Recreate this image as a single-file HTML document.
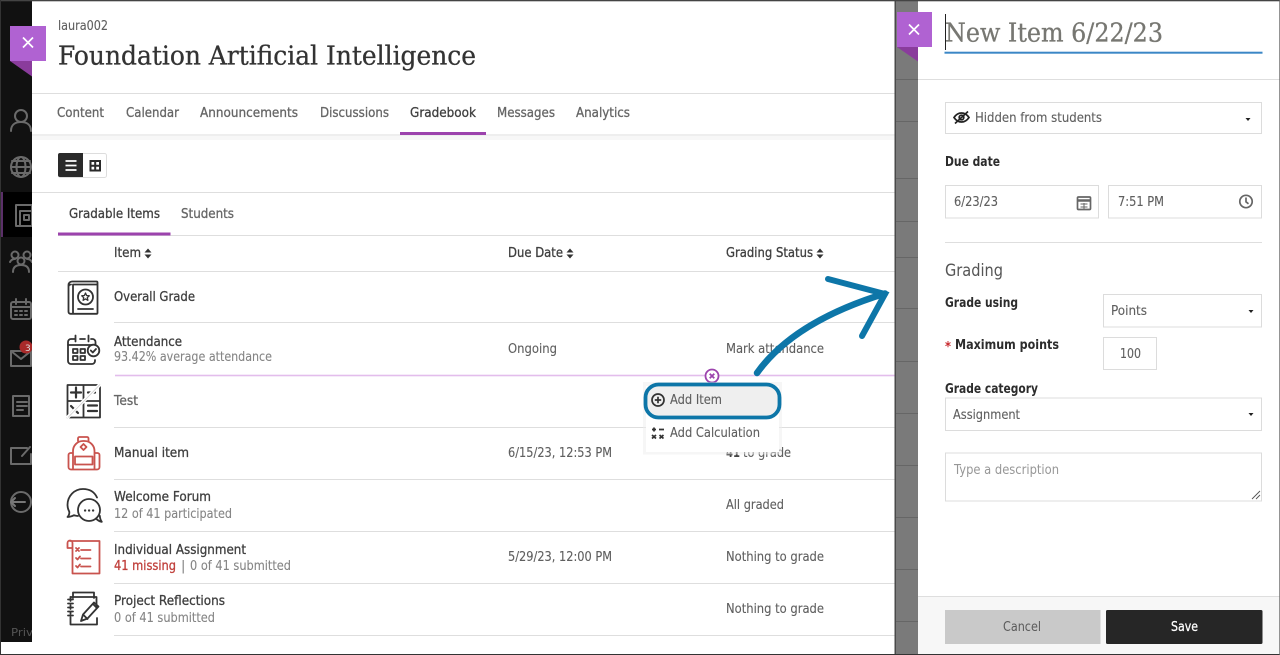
<!DOCTYPE html>
<html><head><meta charset="utf-8"><title>Gradebook</title>
<style>
html,body{margin:0;padding:0;width:1280px;height:655px;overflow:hidden;background:#fff}
svg{display:block;position:absolute;left:0;top:0;filter:blur(.3px)}
text{font-family:"DejaVu Sans","Liberation Sans",sans-serif;font-size:13px;fill:#666;white-space:pre}
.m{fill:#3f3f3f;stroke:#3f3f3f;stroke-width:.3}
.n{fill:#666;stroke:#666;stroke-width:.3}
.s{fill:#858585;stroke:#858585;stroke-width:.1}
.d{fill:#5f5f5f;stroke:#5f5f5f;stroke-width:.12}
.b{fill:#2c2c2c;font-weight:bold;font-size:13px}
.se{font-family:"DejaVu Serif","Liberation Serif",serif}
.ic{fill:none;stroke:#333;stroke-width:1.8;stroke-linejoin:round;stroke-linecap:round}
.r{stroke:#c9534e}
.sb{fill:none;stroke:#6a6a6a;stroke-width:2;stroke-linecap:round;stroke-linejoin:round}
.box{fill:#fff;stroke:#dcdcdc;stroke-width:1}
.l{stroke:#dedede;stroke-width:1}
</style></head><body>
<svg width="1280" height="655" viewBox="0 0 1280 655" xmlns="http://www.w3.org/2000/svg">
<rect width="1280" height="655" fill="#fff"/>
<!-- sidebar -->
<rect x="0" y="0" width="32" height="642" fill="#111"/>
<rect x="0" y="192" width="32" height="45" fill="#000"/>
<rect x="1" y="192" width="2" height="45" fill="#5a2f68"/>
<g class="sb">
<circle cx="21" cy="116" r="6"/><path d="M11 131c0-6 4-9 10-9s10 3 10 9"/>
<circle cx="21" cy="167" r="10"/><ellipse cx="21" cy="167" rx="4.500" ry="10"/><path d="M11 167h20M12 161h18M12 173h18"/>
<rect x="16" y="205" width="16" height="21"/><path d="M20 211h12M20 211v15"/><rect x="24" y="215" width="5" height="5"/>
<circle cx="21" cy="261" r="3.500"/><circle cx="15" cy="255" r="3.500"/><circle cx="27" cy="255" r="3.500"/><path d="M13 272c0-5 3-7 8-7s8 2 8 7M10 262c1-2 3-3 5-3M32 262c-1-2-3-3-5-3"/>
<rect x="11" y="302" width="20" height="17" rx="2"/><path d="M11 307h20M16 299v5M26 299v5M15 311h2M20 311h2M25 311h2M15 315h2M20 315h2M25 315h2"/>
<rect x="11" y="351" width="20" height="15"/><path d="M11 351l10 8 10-8"/>
<path d="M13 396h16v20h-16zM17 402h10M17 406h10M17 410h6"/>
<path d="M27 448H11v16h20v-10M22 456l8-9"/>
<circle cx="21" cy="502" r="10"/><path d="M11 502h14M11 502l4-4M11 502l4 4" stroke="#777"/>
</g>
<circle cx="26" cy="347" r="6.500" fill="#a82a2a"/>
<text x="25" y="351" style="font-size:9px;fill:#ddd">3</text>
<text x="11" y="636" style="font-size:11px;fill:#555" textLength="22" lengthAdjust="spacingAndGlyphs">Priv</text>
<!-- main -->
<rect x="32" y="0" width="863" height="655" fill="#fff"/>
<rect x="0" y="642" width="32" height="13" fill="#fff"/>
<rect x="32" y="136" width="863" height="4" fill="#f7f7f7"/>
<path class="l" d="M32 93.500H895M32 135H895"/>
<path class="l" d="M32 192.500H895M58 235.500H895M58 271.500H895M114 322.500H895M114 427.500H895M114 479.500H895M114 531.500H895M114 583.500H895M114 635.500H895"/>
<text x="58" y="30" class="d" textLength="50" lengthAdjust="spacingAndGlyphs">laura002</text>
<text x="58" y="64.500" class="se" style="font-size:26.500px;fill:#333;stroke:#333;stroke-width:.3" textLength="418" lengthAdjust="spacingAndGlyphs">Foundation Artificial Intelligence</text>
<!-- nav -->
<text class="n" x="57" y="117" textLength="47" lengthAdjust="spacingAndGlyphs">Content</text>
<text class="n" x="126" y="117" textLength="53" lengthAdjust="spacingAndGlyphs">Calendar</text>
<text class="n" x="200" y="117" textLength="98" lengthAdjust="spacingAndGlyphs">Announcements</text>
<text class="n" x="320" y="117" textLength="69" lengthAdjust="spacingAndGlyphs">Discussions</text>
<text class="m" x="410" y="117" textLength="66" lengthAdjust="spacingAndGlyphs">Gradebook</text>
<text class="n" x="497" y="117" textLength="58" lengthAdjust="spacingAndGlyphs">Messages</text>
<text class="n" x="576" y="117" textLength="54" lengthAdjust="spacingAndGlyphs">Analytics</text>
<rect x="400" y="132" width="86" height="3" fill="#9c43ad"/>
<!-- toggle -->
<rect x="58.500" y="153.500" width="48" height="24" rx="2" fill="#fff" stroke="#ddd"/>
<path d="M60 153h23v24H60a2 2 0 0 1-2-2V155a2 2 0 0 1 2-2z" fill="#2a2a2a"/>
<path d="M65.500 161h11M65.500 165.500h11M65.500 170h11" stroke="#fff" stroke-width="1.800"/>
<path d="M90.500 161h9.500v9.500h-9.500zM95.200 161v9.500M90.500 165.700h9.500" stroke="#2a2a2a" stroke-width="2" fill="none"/>
<!-- tabs -->
<text class="m" x="69" y="218" textLength="91" lengthAdjust="spacingAndGlyphs">Gradable Items</text>
<text class="n" x="181" y="218" textLength="53" lengthAdjust="spacingAndGlyphs">Students</text>
<rect x="58" y="232.500" width="112.500" height="3" fill="#9c43ad"/>
<!-- header -->
<g fill="#333">
<text class="m" x="114" y="257" textLength="27" lengthAdjust="spacingAndGlyphs">Item</text>
<path d="M144.500 252.500l3.500-4 3.500 4zM144.500 254.500l3.500 4 3.500-4z"/>
<text class="m" x="508" y="257" textLength="55" lengthAdjust="spacingAndGlyphs">Due Date</text>
<path d="M566.500 252.500l3.500-4 3.500 4zM566.500 254.500l3.500 4 3.500-4z"/>
<text class="m" x="726" y="257" textLength="87" lengthAdjust="spacingAndGlyphs">Grading Status</text>
<path d="M816.500 252.500l3.500-4 3.500 4zM816.500 254.500l3.500 4 3.500-4z"/>
</g>
<!-- rows -->
<text class="m" x="114" y="301" textLength="81" lengthAdjust="spacingAndGlyphs">Overall Grade</text>
<text class="m" x="114" y="346" textLength="68" lengthAdjust="spacingAndGlyphs">Attendance</text>
<text class="s" x="114" y="361" textLength="158" lengthAdjust="spacingAndGlyphs">93.42% average attendance</text>
<text class="d" x="508" y="353" textLength="49" lengthAdjust="spacingAndGlyphs">Ongoing</text>
<text class="d" x="726" y="353" textLength="98" lengthAdjust="spacingAndGlyphs">Mark attendance</text>
<text class="n" x="114" y="405" textLength="24" lengthAdjust="spacingAndGlyphs">Test</text>
<text class="m" x="114" y="457" textLength="75" lengthAdjust="spacingAndGlyphs">Manual item</text>
<text class="d" x="508" y="457" textLength="104" lengthAdjust="spacingAndGlyphs">6/15/23, 12:53 PM</text>
<text x="726" y="457" style="font-weight:bold;fill:#444" textLength="14" lengthAdjust="spacingAndGlyphs">41</text>
<text class="d" x="743" y="457" textLength="48" lengthAdjust="spacingAndGlyphs">to grade</text>
<text class="m" x="114" y="501" textLength="97" lengthAdjust="spacingAndGlyphs">Welcome Forum</text>
<text class="s" x="114" y="518" textLength="118" lengthAdjust="spacingAndGlyphs">12 of 41 participated</text>
<text class="d" x="726" y="509" textLength="58" lengthAdjust="spacingAndGlyphs">All graded</text>
<text class="m" x="114" y="554" textLength="132" lengthAdjust="spacingAndGlyphs">Individual Assignment</text>
<text x="114" y="570" style="fill:#c0403c;stroke:#c0403c;stroke-width:.3" textLength="62" lengthAdjust="spacingAndGlyphs">41 missing</text>
<text class="s" x="181" y="570">|</text>
<text class="s" x="190" y="570" textLength="101" lengthAdjust="spacingAndGlyphs">0 of 41 submitted</text>
<text class="d" x="508" y="561" textLength="104" lengthAdjust="spacingAndGlyphs">5/29/23, 12:00 PM</text>
<text class="d" x="726" y="561" textLength="98" lengthAdjust="spacingAndGlyphs">Nothing to grade</text>
<text class="m" x="114" y="605" textLength="111" lengthAdjust="spacingAndGlyphs">Project Reflections</text>
<text class="s" x="114" y="622" textLength="101" lengthAdjust="spacingAndGlyphs">0 of 41 submitted</text>
<text class="d" x="726" y="613" textLength="98" lengthAdjust="spacingAndGlyphs">Nothing to grade</text>
<!-- row icons -->
<g class="ic">
<!-- book -->
<path d="M73 281.500h23.500a1 1 0 0 1 1 1v30.500a.8.8 0 0 1-.8.8H70.500a2 2 0 0 1-2-2V285a3.500 3.500 0 0 1 3.500-3.500zM73 284.500h24.500M73 284.500v29.300M68.500 287a2.500 2.500 0 0 1 2.500-2.500"/>
<circle cx="85.500" cy="297" r="7.500"/><path d="M85.500 293l1.100 2.500 2.700.3-2 1.800.6 2.700-2.400-1.400-2.400 1.400.6-2.700-2-1.800 2.700-.3z" stroke-width="1.300"/><path d="M78 309h15"/>
<!-- attendance -->
<path d="M74.500 339h-3.500a3 3 0 0 0-3 3v19a3 3 0 0 0 3 3h21a3 3 0 0 0 3-3v-1M80 339h5M91 339h1.500a3 3 0 0 1 3 3v2M75.500 335.500v6M88.500 335.500v6"/>
<path d="M68 345h27"/>
<rect x="73" y="349" width="4.500" height="4"/><rect x="80.500" y="349" width="4.500" height="4"/><rect x="73" y="356" width="4.500" height="4"/><rect x="80.500" y="356" width="4.500" height="4"/>
<circle cx="93.500" cy="350.500" r="5.800" fill="#fff"/><path d="M90.800 350.500l2 2 3.200-3.500"/>
<!-- calc -->
<path d="M67.500 385h32.500v32.500H67.500zM83.500 385v32.500M67.500 401h32.500"/>
<path d="M71 392.500h10M76 387.500v10M88 392.500h7M71 406l7 7M78 406l-7 7M88 405.500h9M88 411h9" stroke-width="2.200"/>
</g>
<path d="M100.500 384L67 418" stroke="#fff" stroke-width="3.500"/>
<path d="M100 384.500L68 417.500" stroke="#ccc" stroke-width=".8"/>
<g class="ic r">
<!-- backpack -->
<path d="M78 441v-2.500a1.500 1.500 0 0 1 1.500-1.500h7.500a1.500 1.500 0 0 1 1.500 1.500v2.500M73 469.500V451a10 10 0 0 1 10-10h1.500a10 10 0 0 1 10 10v18.500zM73 453h-2.500a2 2 0 0 0-2 2v12a2.500 2.500 0 0 0 2.500 2.500h2M94.500 453h3a2 2 0 0 1 2 2v12a2.500 2.500 0 0 1-2.500 2.500h-2.500"/>
<path d="M83.500 444l3 3-3 3-3-3z"/>
<rect x="75" y="456.500" width="17.500" height="8"/>
<!-- list -->
<path d="M67.500 543a2.500 2.500 0 0 1 5 0v5h-5zM70 541h29.500v32.500H72.500v-30"/>
<path d="M81 550h9.500M81 558.500h9.500M81 566.500h9.500M76 548l3 3M79 548l-3 3M76 558l1.500 1.500 2.500-3M76 566l1.500 1.500 2.500-3"/>
</g>
<g class="ic">
<!-- forum -->
<path d="M78 516c-1.500 0-3-.4-4-.8-1.800.9-4 1.800-6.500 1.800 1.300-1.300 2-3 1.800-5.200a15 15 0 0 1-1.800-6.800c0-9 6.800-16 15.500-16 6.500 0 11.500 3 14 8.500"/>
<circle cx="89" cy="510" r="11" fill="#fff"/>
<path d="M96 518.500c1.500 1.700 3.500 3 5.800 3.300-1-1.300-1.800-3.500-2-6"/>
<path d="M85 510.500h.2M89 510.500h.2M93 510.500h.2" stroke-width="2.200"/>
<!-- notebook -->
<path d="M73 598v-5.500h21v5.500M70.500 597h26v11M97 618v6.500H70.500V617"/><path d="M70.500 597v4M70.500 605v4M70.500 612v2"/>
<path d="M68 599.500h5M68 603.500h5M68 607.500h5M68 611.500h5M68 615.500h5"/>
<path d="M81 621l2-6.500 11-12 4.500 4-11 12zM83 614.500l4.500 4.500M93 604l4 4M81 621l2.500-1"/>
</g>
<!-- purple add line -->
<rect x="115" y="374.700" width="780" height="1.600" fill="#e3bdec"/>
<circle cx="712" cy="376" r="6.500" fill="#fff" stroke="#9c43ad" stroke-width="1.800"/>
<path d="M709.700 373.700l4.600 4.600M714.300 373.700l-4.600 4.600" stroke="#9c43ad" stroke-width="1.800"/>
<!-- popup -->
<rect x="643" y="382" width="139" height="72.500" fill="#eee" opacity=".5"/>
<rect x="646" y="386" width="133" height="66" fill="#fff"/>
<rect x="645.500" y="384.500" width="134" height="33" rx="13" fill="#efefef" stroke="#0d76a8" stroke-width="3.800"/>
<circle cx="658" cy="400" r="6" fill="none" stroke="#333" stroke-width="1.700"/>
<path d="M654.800 400h6.400M658 396.800v6.400" stroke="#333" stroke-width="1.700"/>
<text class="d" x="670" y="404" textLength="52" lengthAdjust="spacingAndGlyphs">Add Item</text>
<path d="M652 429.500h4M654 427.500v4M659 429.500h5M652 435l4 3.500M656 435l-4 3.500M659.500 435l4 3.500M663.500 435l-4 3.500" stroke="#333" stroke-width="1.800" fill="none"/>
<text class="d" x="670" y="437" textLength="90" lengthAdjust="spacingAndGlyphs">Add Calculation</text>
<!-- gray strip -->
<rect x="895" y="0" width="23" height="655" fill="#7a7a7a"/>
<rect x="894.500" y="0" width="1.500" height="655" fill="#4a4a4a"/>
<path d="M896 79.500h22M896 121.500h22M896 178.500h22M896 221.500h22M896 257.500h22M896 308.500h22M896 361.500h22M896 413.500h22M896 465.500h22M896 517.500h22M896 569.500h22M896 621.500h22" stroke="#666" stroke-width="1"/>
<!-- arrow -->
<path d="M757 373C782 338 825 312 885 293.500" fill="none" stroke="#0d76a8" stroke-width="6.500" stroke-linecap="round"/>
<path d="M828 279L885 294 862 336" fill="none" stroke="#0d76a8" stroke-width="6" stroke-linecap="round" stroke-linejoin="miter"/>
<!-- tags -->
<rect x="10" y="26" width="36" height="35" fill="#b062d2"/>
<path d="M10 61h22v15.500z" fill="#8a3c9c"/>
<path d="M23 37.500l10 10M33 37.500l-10 10" stroke="#fff" stroke-width="1.700"/>
<!-- panel -->
<rect x="918" y="0" width="362" height="655" fill="#fff"/>
<rect x="897" y="12" width="35" height="35" fill="#b062d2"/>
<path d="M897 47h21v14.500z" fill="#8a3c9c"/>
<path d="M909 24.500l10 10M919 24.500l-10 10" stroke="#fff" stroke-width="1.700"/>
<text class="se" x="945" y="41.500" style="font-size:26.500px;fill:#777772;stroke:#777772;stroke-width:.3" textLength="218" lengthAdjust="spacingAndGlyphs">New Item 6/22/23</text>
<rect x="945" y="14" width="1" height="36" fill="#222"/>
<rect x="944.500" y="51.700" width="318" height="2" fill="#3b87c6"/>
<path class="l" d="M918 79.500H1280"/>
<rect class="box" x="945.500" y="102.500" width="316" height="31"/>
<g fill="none" stroke="#222" stroke-width="1.700">
<path d="M954 117.500c2-3 4.500-4.500 7.500-4.500s5.500 1.500 7.500 4.500c-2 3-4.500 4.500-7.500 4.500s-5.500-1.500-7.500-4.500z"/><circle cx="961.500" cy="117.500" r="2.300"/><path d="M955 123.500l13-12"/>
</g>
<text class="d" x="975" y="122" textLength="127" lengthAdjust="spacingAndGlyphs">Hidden from students</text>
<path d="M1245.500 118h5l-2.500 3z" fill="#222"/>
<text class="b" x="945" y="166" textLength="55" lengthAdjust="spacingAndGlyphs">Due date</text>
<rect class="box" x="945.500" y="185.500" width="153" height="32.500"/>
<rect class="box" x="1108.500" y="185.500" width="153" height="32.500"/>
<text class="d" x="954" y="206" textLength="44" lengthAdjust="spacingAndGlyphs">6/23/23</text>
<text class="d" x="1118" y="206" textLength="46" lengthAdjust="spacingAndGlyphs">7:51 PM</text>
<g fill="none" stroke="#666" stroke-width="1.700">
<rect x="1077.500" y="197" width="13" height="12.500" rx="1"/><path d="M1077.500 200.500h13" stroke-width="2.500"/><path d="M1080.500 204h7M1080.500 207h7M1084 203v6" stroke-width="1"/>
<circle cx="1246" cy="201.500" r="6.200"/><path d="M1246 197.500v4.300l2.500 2"/>
</g>
<path class="l" d="M945 242.500H1262" stroke="#d5d5d5"/>
<text x="945" y="276" style="font-size:16.500px;fill:#555" textLength="58" lengthAdjust="spacingAndGlyphs">Grading</text>
<text class="b" x="945" y="307" textLength="73" lengthAdjust="spacingAndGlyphs">Grade using</text>
<rect class="box" x="1103.500" y="294.500" width="158" height="32.500"/>
<text class="d" x="1111" y="315" textLength="36" lengthAdjust="spacingAndGlyphs">Points</text>
<path d="M1248.500 310h5l-2.500 3z" fill="#222"/>
<text x="945" y="351" style="font-weight:bold;fill:#c8282d" textLength="6" lengthAdjust="spacingAndGlyphs">*</text>
<text class="b" x="955" y="349" textLength="104" lengthAdjust="spacingAndGlyphs">Maximum points</text>
<rect class="box" x="1103.500" y="337.500" width="53" height="32"/>
<text class="d" x="1120" y="358" textLength="21" lengthAdjust="spacingAndGlyphs">100</text>
<text class="b" x="945" y="393" textLength="93" lengthAdjust="spacingAndGlyphs">Grade category</text>
<rect class="box" x="945.500" y="398" width="316" height="32.500"/>
<text class="d" x="953" y="419" textLength="67" lengthAdjust="spacingAndGlyphs">Assignment</text>
<path d="M1248.500 413h5l-2.500 3z" fill="#222"/>
<rect class="box" x="945.500" y="453" width="316" height="48"/>
<text x="954" y="474" style="fill:#979797" textLength="105" lengthAdjust="spacingAndGlyphs">Type a description</text>
<path d="M1252 499l8-8M1256 499l4-4" stroke="#555" stroke-width=".9"/>
<!-- footer -->
<rect x="918" y="597" width="362" height="58" fill="#f7f7f7"/>
<path class="l" d="M918 596.500H1280" stroke="#d8d8d8"/>
<rect x="945" y="610" width="155.500" height="34" fill="#c9c9c9"/>
<text x="1003" y="631" style="fill:#5a5a5a" textLength="38" lengthAdjust="spacingAndGlyphs">Cancel</text>
<rect x="1106" y="610" width="156.500" height="34" rx="1.500" fill="#262626"/>
<text x="1171" y="631" style="fill:#fff;stroke:#fff;stroke-width:.25" textLength="27" lengthAdjust="spacingAndGlyphs">Save</text>
<!-- frame -->
<rect x="0" y="0" width="1280" height="1.300" fill="#444"/>
<rect x="0" y="654" width="1280" height="1" fill="#333"/>
<rect x="0" y="0" width="1" height="655" fill="#333"/>
<rect x="1279.300" y="0" width=".7" height="655" fill="#666"/>
</svg>
</body></html>
